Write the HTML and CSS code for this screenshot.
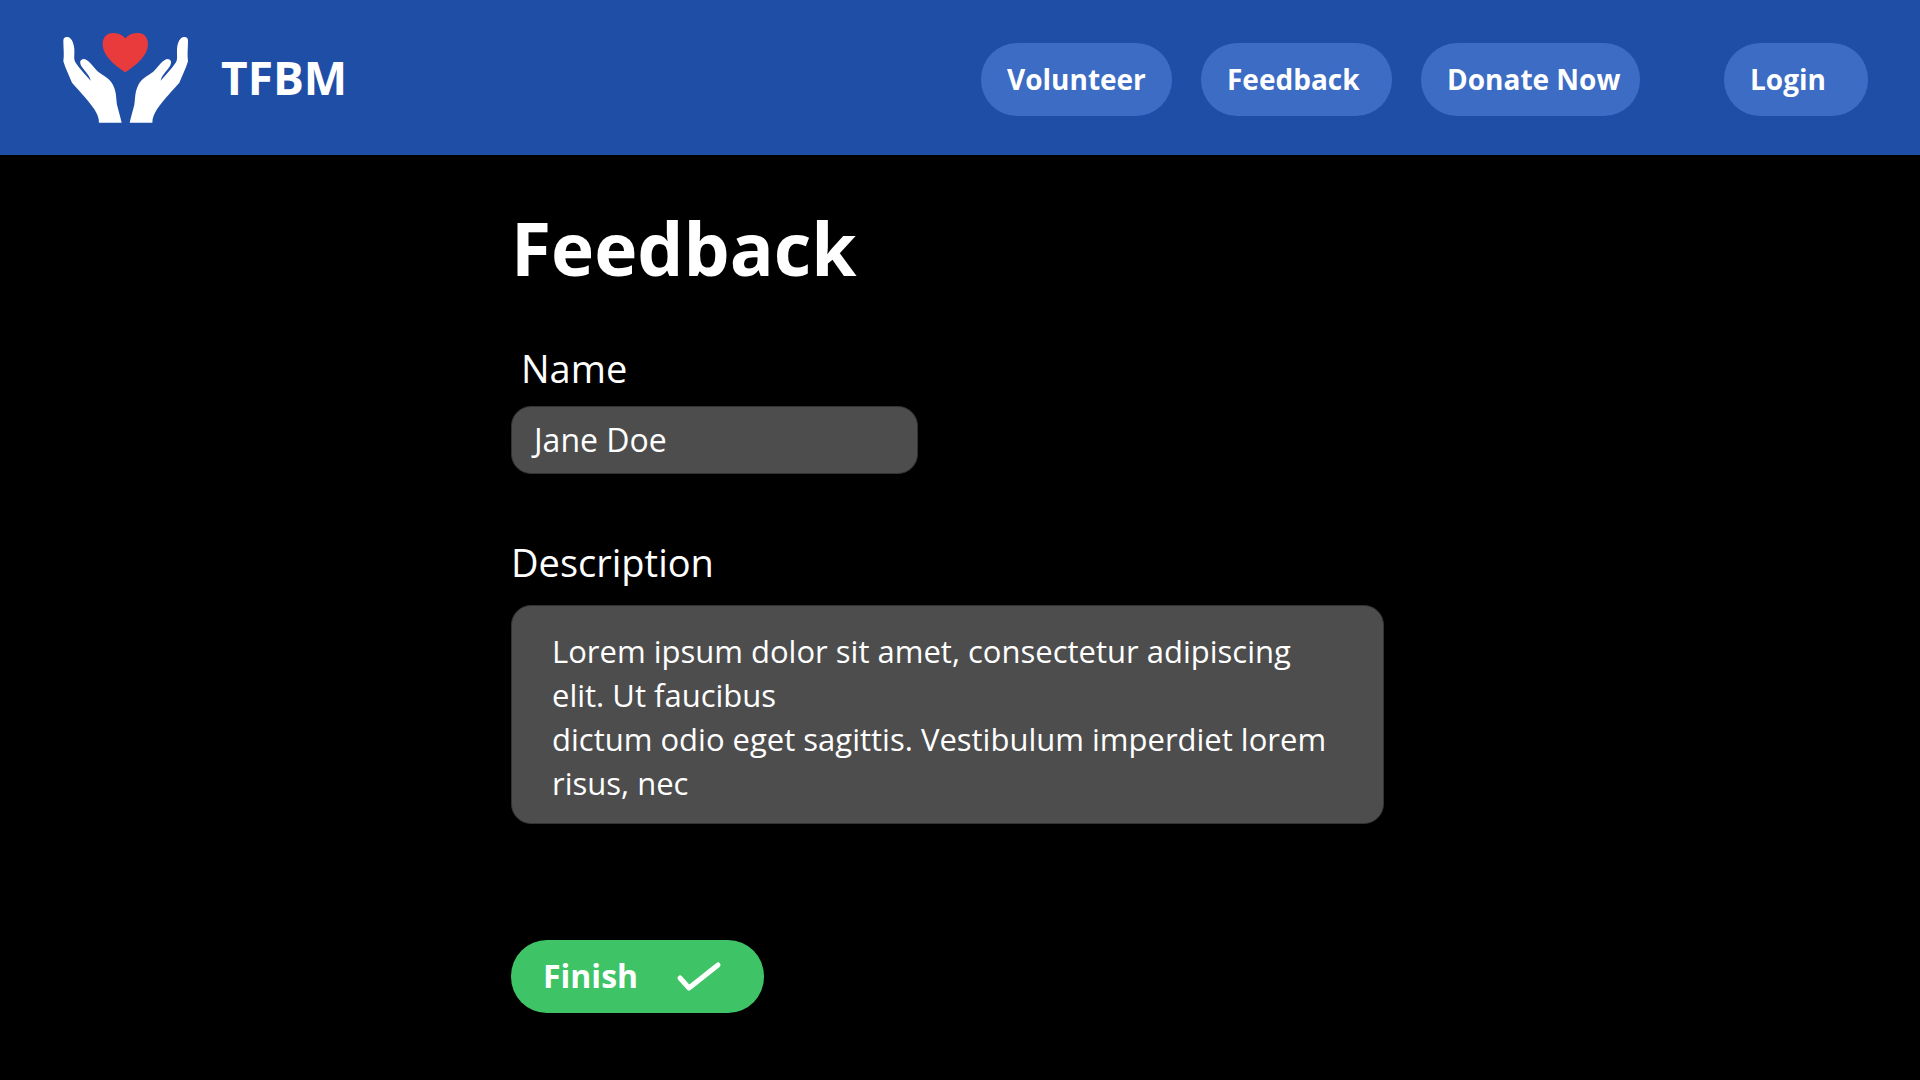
FILE: index.html
```html
<!DOCTYPE html>
<html lang="en">
<head>
<meta charset="utf-8">
<meta name="viewport" content="width=device-width, initial-scale=1">
<title>TFBM – Feedback</title>
<link rel="stylesheet" href="styles.css">
</head>
<body>
<header class="site-header">
  <a class="brand" href="#">
    <svg class="brand-logo" viewBox="66 63 378 288" aria-hidden="true">
      <path class="heart" d="M256 187C231 171 188 140 188 103C188 82 201 69 218 69C234 69 247 74 256 85C265 74 278 69 294 69C312 69 324 82 324 103C324 140 281 171 256 187Z"/>
      <g id="hand">
        <path class="hand" d="M70 92C70 84 75 80 82 81C94 82 101 97 103 117C104 131 101 143 104 152C110 166 133 190 152 212C149 196 136 186 126 171C118 160 119 149 130 147C145 147 157 168 175 186C190 197 210 206 219 225C230 247 228 266 231 284C236 303 241 320 245 338H177C177 324 172 312 163 298C150 277 127 253 96 218C87 196 76 175 70 154C73 134 70 113 70 92Z"/>
      </g>
      <use href="#hand" transform="translate(514 0) scale(-1 1)"/>
    </svg>
    <span class="brand-name">TFBM</span>
  </a>
  <nav class="nav" aria-label="Main">
    <a class="pill" href="#">Volunteer</a>
    <a class="pill" href="#">Feedback</a>
    <a class="pill pill-wide" href="#">Donate Now</a>
    <a class="pill pill-login" href="#">Login</a>
  </nav>
</header>
<main class="page">
  <form class="form">
    <h1 class="title">Feedback</h1>
    <div class="field">
      <label class="label label-name" for="name">Name</label>
      <input class="control control-name" id="name" type="text" value="Jane Doe">
    </div>
    <div class="field">
      <label class="label" for="description">Description</label>
      <textarea class="control control-description" id="description" rows="4">Lorem ipsum dolor sit amet, consectetur adipiscing elit. Ut faucibus
dictum odio eget sagittis. Vestibulum imperdiet lorem risus, nec</textarea>
    </div>
    <button class="finish" type="button">
      Finish
      <svg class="check" viewBox="0 0 46 32" aria-hidden="true"><path d="M4 18L13 28L42 5"/></svg>
    </button>
  </form>
</main>
</body>
</html>
```
FILE: styles.css
```css
* {
  box-sizing: border-box;
}

body {
  margin: 0;
  min-height: 100vh;
  background: #000;
  color: #fff;
  font-family: "Open Sans", "Noto Sans", sans-serif;
}

.site-header {
  display: flex;
  align-items: center;
  justify-content: space-between;
  flex-wrap: wrap;
  min-height: 155px;
  padding: 4px 52px 0 62px;
  background: #1e4ea6;
}

.brand {
  display: flex;
  align-items: center;
  gap: 33px;
  padding-bottom: 2px;
  color: inherit;
  text-decoration: none;
}

.brand-logo {
  width: 126px;
  height: 96px;
}

.heart {
  fill: #e93b3b;
}

.hand {
  fill: #fff;
}

.brand-name {
  padding-bottom: 4px;
  font-size: 46px;
  font-weight: 700;
}

.nav {
  display: flex;
  flex-wrap: wrap;
  gap: 29px;
}

.pill {
  min-width: 191px;
  padding: 16px 16px 17px 26px;
  border-radius: 36px;
  background: #3c6cc4;
  color: inherit;
  font-size: 28px;
  font-weight: 700;
  line-height: 40px;
  text-decoration: none;
}

.pill-wide {
  min-width: 219px;
}

.pill-login {
  min-width: 144px;
  margin-left: 55px;
}

.page {
  display: grid;
  grid-template-columns: 511fr minmax(0, 873fr) 536fr;
  padding: 48px 0;
}

.form {
  grid-column: 2;
  display: flex;
  flex-direction: column;
  align-items: flex-start;
}

.title {
  margin: 0 0 45px;
  font-size: 73px;
  font-weight: 700;
  line-height: 90px;
}

.field {
  display: flex;
  flex-direction: column;
  align-items: flex-start;
  width: 100%;
  margin-bottom: 58px;
}

.label {
  margin-bottom: 13px;
  font-size: 38px;
  line-height: 60px;
}

.label-name {
  margin-bottom: 8px;
  padding-left: 10px;
}

.control {
  display: block;
  border: 1px solid #333;
  border-radius: 20px;
  background: #4d4d4d;
  color: inherit;
  font-family: inherit;
  font-size: 32px;
  line-height: 44px;
}

.control-name {
  width: 407px;
  max-width: 100%;
  height: 68px;
  padding: 0 12px 2px;
  text-indent: 10px;
}

.control-description {
  width: 100%;
  padding: 23px 40px 18px;
  font-size: 31px;
  resize: none;
  overflow: hidden;
}

.finish {
  display: flex;
  align-items: center;
  gap: 38px;
  min-width: 253px;
  margin-top: 58px;
  padding: 14px 32px 15px;
  border: 0;
  border-radius: 36px;
  background: #3ec466;
  color: inherit;
  font-family: inherit;
  font-size: 32px;
  font-weight: 700;
  line-height: 44px;
}

.check {
  width: 46px;
  height: 32px;
  fill: none;
  stroke: #fff;
  stroke-width: 5;
  stroke-linecap: round;
  stroke-linejoin: round;
}
```
